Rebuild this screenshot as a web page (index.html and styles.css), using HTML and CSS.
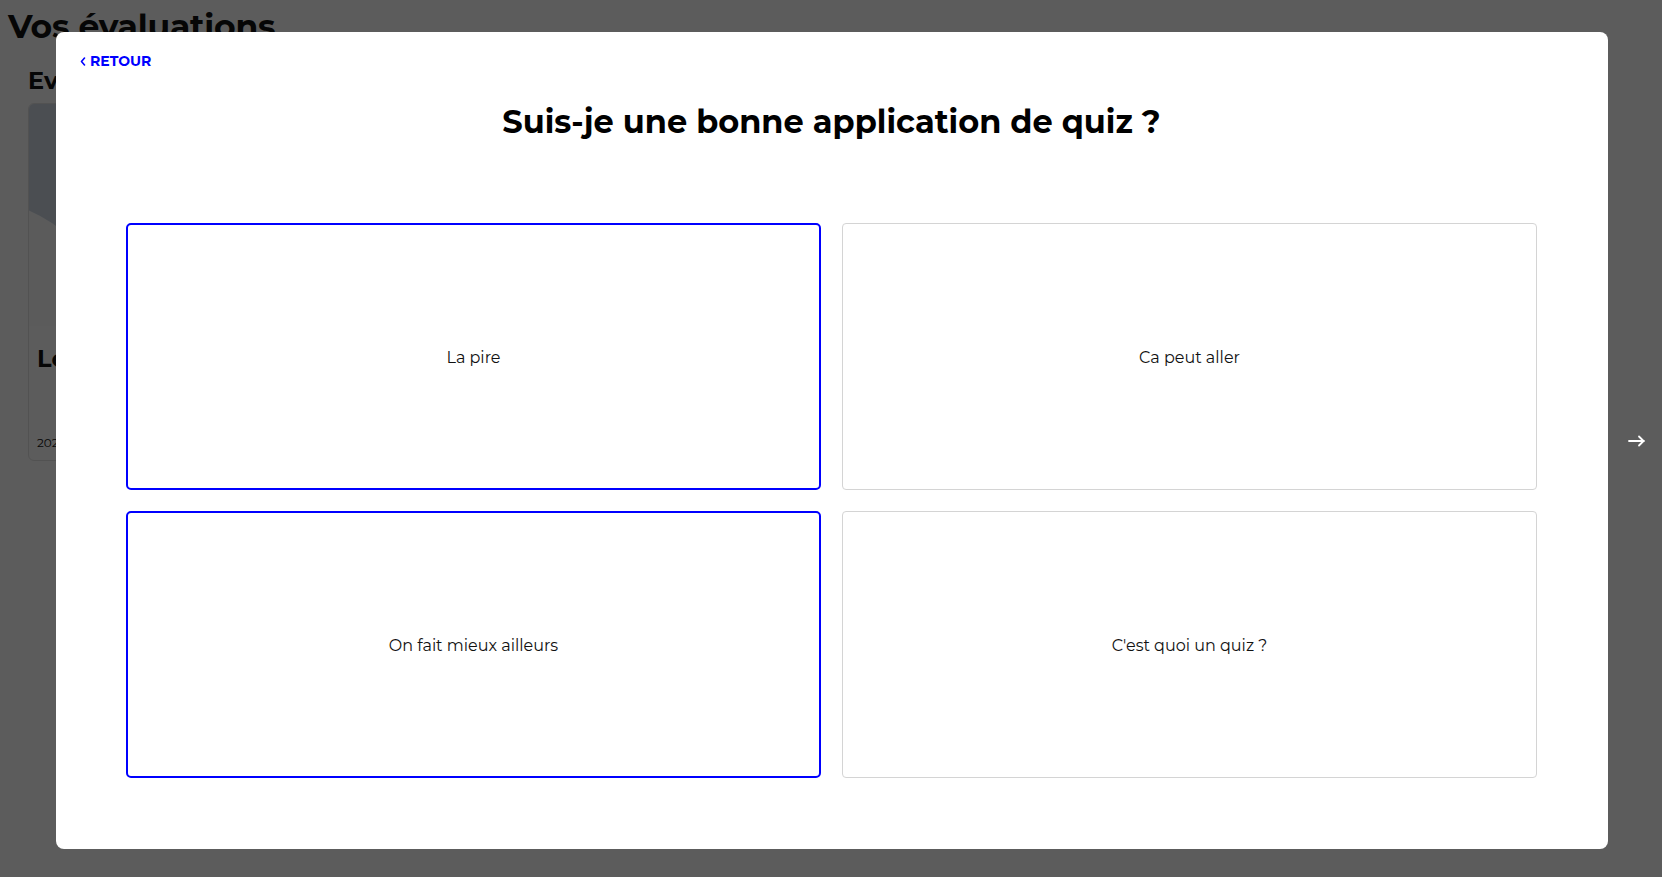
FILE: index.html
```html
<!DOCTYPE html>
<html lang="fr">
<head>
<meta charset="utf-8">
<title>Quiz</title>
<link rel="stylesheet" href="styles.css">
</head>
<body>
<main class="page">
  <h1 class="page-title">Vos évaluations</h1>
  <h2 class="section-title">Evaluations</h2>
  <div class="eval-card">
    <div class="eval-image"><div class="eval-curve"></div></div>
    <div class="eval-body">
      <h3 class="eval-name">Le quiz</h3>
      <p class="eval-date">2023</p>
    </div>
  </div>
</main>
<div class="overlay">
  <div class="modal">
    <a class="back" href="#"><svg class="chev" width="6" height="9" viewBox="0 0 6 9"><path d="M4.5 1L1.5 4.5 4.5 8" fill="none" stroke="#0000ff" stroke-width="1.6" stroke-linecap="round" stroke-linejoin="round"/></svg><span>RETOUR</span></a>
    <h2 class="question">Suis-je une bonne application de quiz ?</h2>
    <div class="answers">
      <button class="answer selected">La pire</button>
      <button class="answer">Ca peut aller</button>
      <button class="answer selected">On fait mieux ailleurs</button>
      <button class="answer">C'est quoi un quiz ?</button>
    </div>
  </div>
  <button class="next" aria-label="Suivant">
    <svg width="18" height="12" viewBox="0 0 18 12"><path d="M1 6h15M11 1.5l4.5 4.5L11 10.5" fill="none" stroke="#fff" stroke-width="1.8" stroke-linecap="round" stroke-linejoin="round"/></svg>
  </button>
</div>
</body>
</html>
```
FILE: styles.css
```css
* { box-sizing: border-box; }
html, body { margin: 0; padding: 0; }
body {
  background: #fff;
  font-family: "Montserrat", "Noto Sans", "DejaVu Sans", sans-serif;
  color: #111;
  width: 1662px;
  height: 877px;
  overflow: hidden;
}
.page { padding: 0 8px; }
.page-title {
  margin: 0;
  padding-top: 6px;
  font-size: 33px;
  font-weight: 700;
  letter-spacing: -0.2px;
}
.section-title {
  margin: 20px 0 0 20px;
  font-size: 24px;
  font-weight: 700;
}
.eval-card {
  margin: 8px 0 0 20px;
  width: 300px;
  height: 358px;
  border: 1px solid #e3e3e3;
  border-radius: 6px;
  overflow: hidden;
}
.eval-image {
  height: 222px;
  background: #d0d8e3;
  position: relative;
  overflow: hidden;
}
.eval-curve {
  position: absolute;
  left: -210px; top: 94px;
  width: 300px; height: 300px;
  border-radius: 50%;
  background: #fbfcfd;
}
.eval-body { padding: 18px 8px; }
.eval-name { margin: 0; font-size: 24px; font-weight: 700; }
.eval-date { margin: 62px 0 0; font-size: 12px; }

.overlay {
  position: fixed;
  inset: 0;
  background: rgba(0, 0, 0, 0.64);
  display: flex;
  padding: 32px 54px 28px 56px;
}
.modal {
  flex: 1;
  background: #fff;
  border-radius: 8px;
  padding: 19px 71px 0 70px;
  display: flex;
  flex-direction: column;
}
.back {
  align-self: flex-start;
  margin-left: -46px;
  display: flex;
  align-items: center;
  gap: 4px;
  color: #0000ff;
  text-decoration: none;
  font-weight: 700;
  font-size: 14px;
  line-height: 20px;
}
.question {
  margin: 31px 0 0;
  text-align: center;
  font-size: 32px;
  line-height: 40px;
  font-weight: 700;
  color: #000;
}
.answers {
  margin-top: 81px;
  display: grid;
  grid-template-columns: 1fr 1fr;
  grid-template-rows: 267px 267px;
  gap: 21px;
}
.answer {
  background: #fff;
  border: 1px solid #d4d4d4;
  border-radius: 4px;
  font-family: inherit;
  font-size: 16px;
  color: #111;
  cursor: pointer;
  padding-top: 2px;
}
.answer.selected {
  border: 2px solid #0000ff;
  border-radius: 5px;
}
.next {
  position: absolute;
  right: 12px;
  top: 431px;
  background: none;
  border: 0;
  padding: 4px;
  cursor: pointer;
}
```
